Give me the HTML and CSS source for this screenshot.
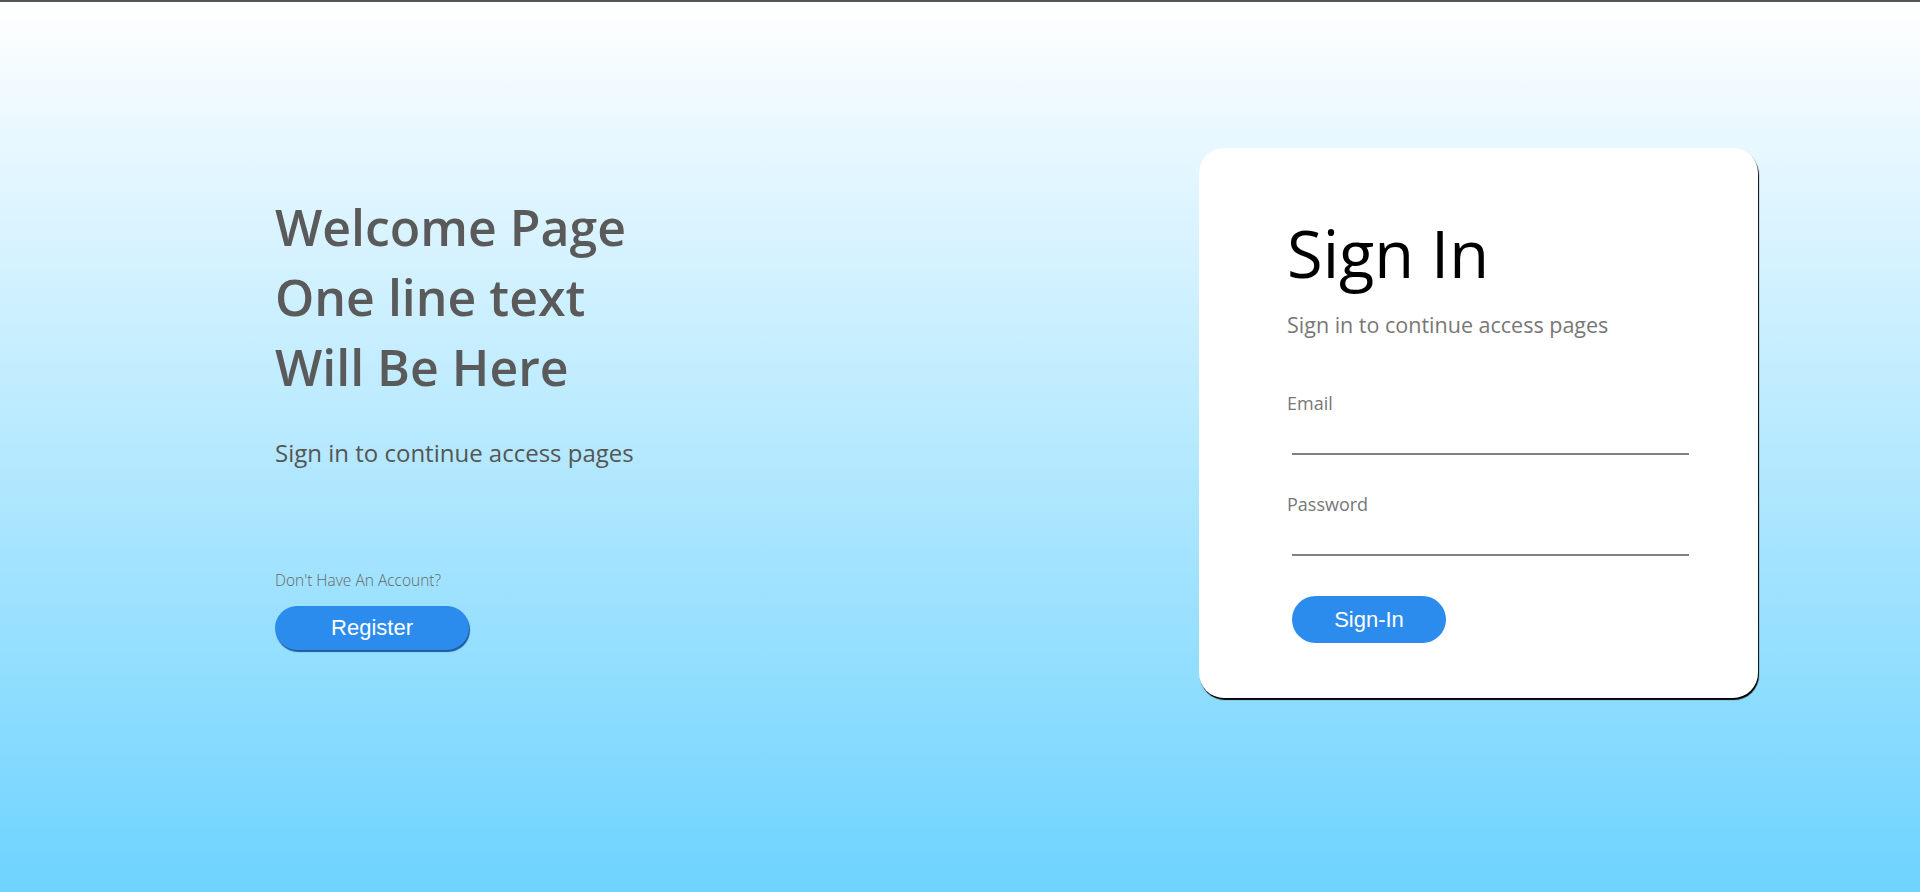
FILE: index.html
```html
<!DOCTYPE html>
<html lang="en">
<head>
<meta charset="utf-8">
<title>Welcome Page</title>
<link rel="stylesheet" href="styles.css">
</head>
<body>
<main class="page">
  <section class="intro">
    <h1 class="intro-title">Welcome Page<br>One line text<br>Will Be Here</h1>
    <p class="intro-sub">Sign in to continue access pages</p>
    <p class="intro-note">Don't Have An Account?</p>
    <button class="btn btn-register" type="button">Register</button>
  </section>
  <section class="card">
    <h2 class="card-title">Sign In</h2>
    <p class="card-sub">Sign in to continue access pages</p>
    <form class="form">
      <label class="field-label" for="email">Email</label>
      <input class="field-input" id="email" type="email">
      <label class="field-label field-label-gap" for="password">Password</label>
      <input class="field-input" id="password" type="password">
      <button class="btn btn-signin" type="button">Sign-In</button>
    </form>
  </section>
</main>
</body>
</html>
```
FILE: styles.css
```css
* { box-sizing: border-box; }
html, body { margin: 0; padding: 0; }
body {
  font-family: "Open Sans", "Noto Sans", sans-serif;
  border-top: 2px solid #555;
  min-height: 892px;
  background: linear-gradient(180deg, #ffffff 0%, #6dd3ff 100%);
}
.page {
  display: flex;
  justify-content: space-between;
  align-items: flex-start;
  padding: 146px 162px 0 275px;
  height: 890px;
}
.intro {
  margin-top: 44px;
  display: flex;
  flex-direction: column;
  align-items: flex-start;
}
.intro-title {
  margin: 0;
  font-size: 50px;
  font-weight: 600;
  line-height: 70px;
  color: #5a5a5a;
}
.intro-sub {
  margin: 34px 0 0;
  font-size: 24px;
  color: #555;
}
.intro-note {
  margin: 100px 0 0;
  font-size: 15.5px;
  font-weight: 300;
  color: #666;
}
.btn {
  border: none;
  border-radius: 30px;
  background: #2b8cee;
  color: #fff;
  font-family: "Liberation Sans", Arial, sans-serif;
  font-size: 22px;
  cursor: pointer;
}
.btn-register {
  margin-top: 15px;
  width: 194px;
  height: 44px;
  box-shadow: 1px 2px 1px #1c5a9a;
}
.card {
  width: 559px;
  height: 550px;
  background: #fff;
  border-radius: 25px;
  box-shadow: 1px 2px 1px #000;
  padding: 61px 60px 0 88px;
}
.card-title {
  margin: 0;
  font-size: 65px;
  font-weight: 400;
  color: #000;
}
.card-sub {
  margin: 13px 0 0;
  font-size: 21.5px;
  color: #777;
}
.form {
  margin-top: 52px;
  display: flex;
  flex-direction: column;
  align-items: flex-start;
}
.field-label {
  font-size: 18px;
  color: #777;
}
.field-label-gap { margin-top: 37px; }
.field-input {
  margin: 2px 0 0 5px;
  width: 397px;
  height: 38px;
  border: none;
  border-bottom: 2px solid #808080;
  background: transparent;
  outline: none;
}
.btn-signin {
  margin: 40px 0 0 5px;
  width: 154px;
  height: 47px;
}
```
